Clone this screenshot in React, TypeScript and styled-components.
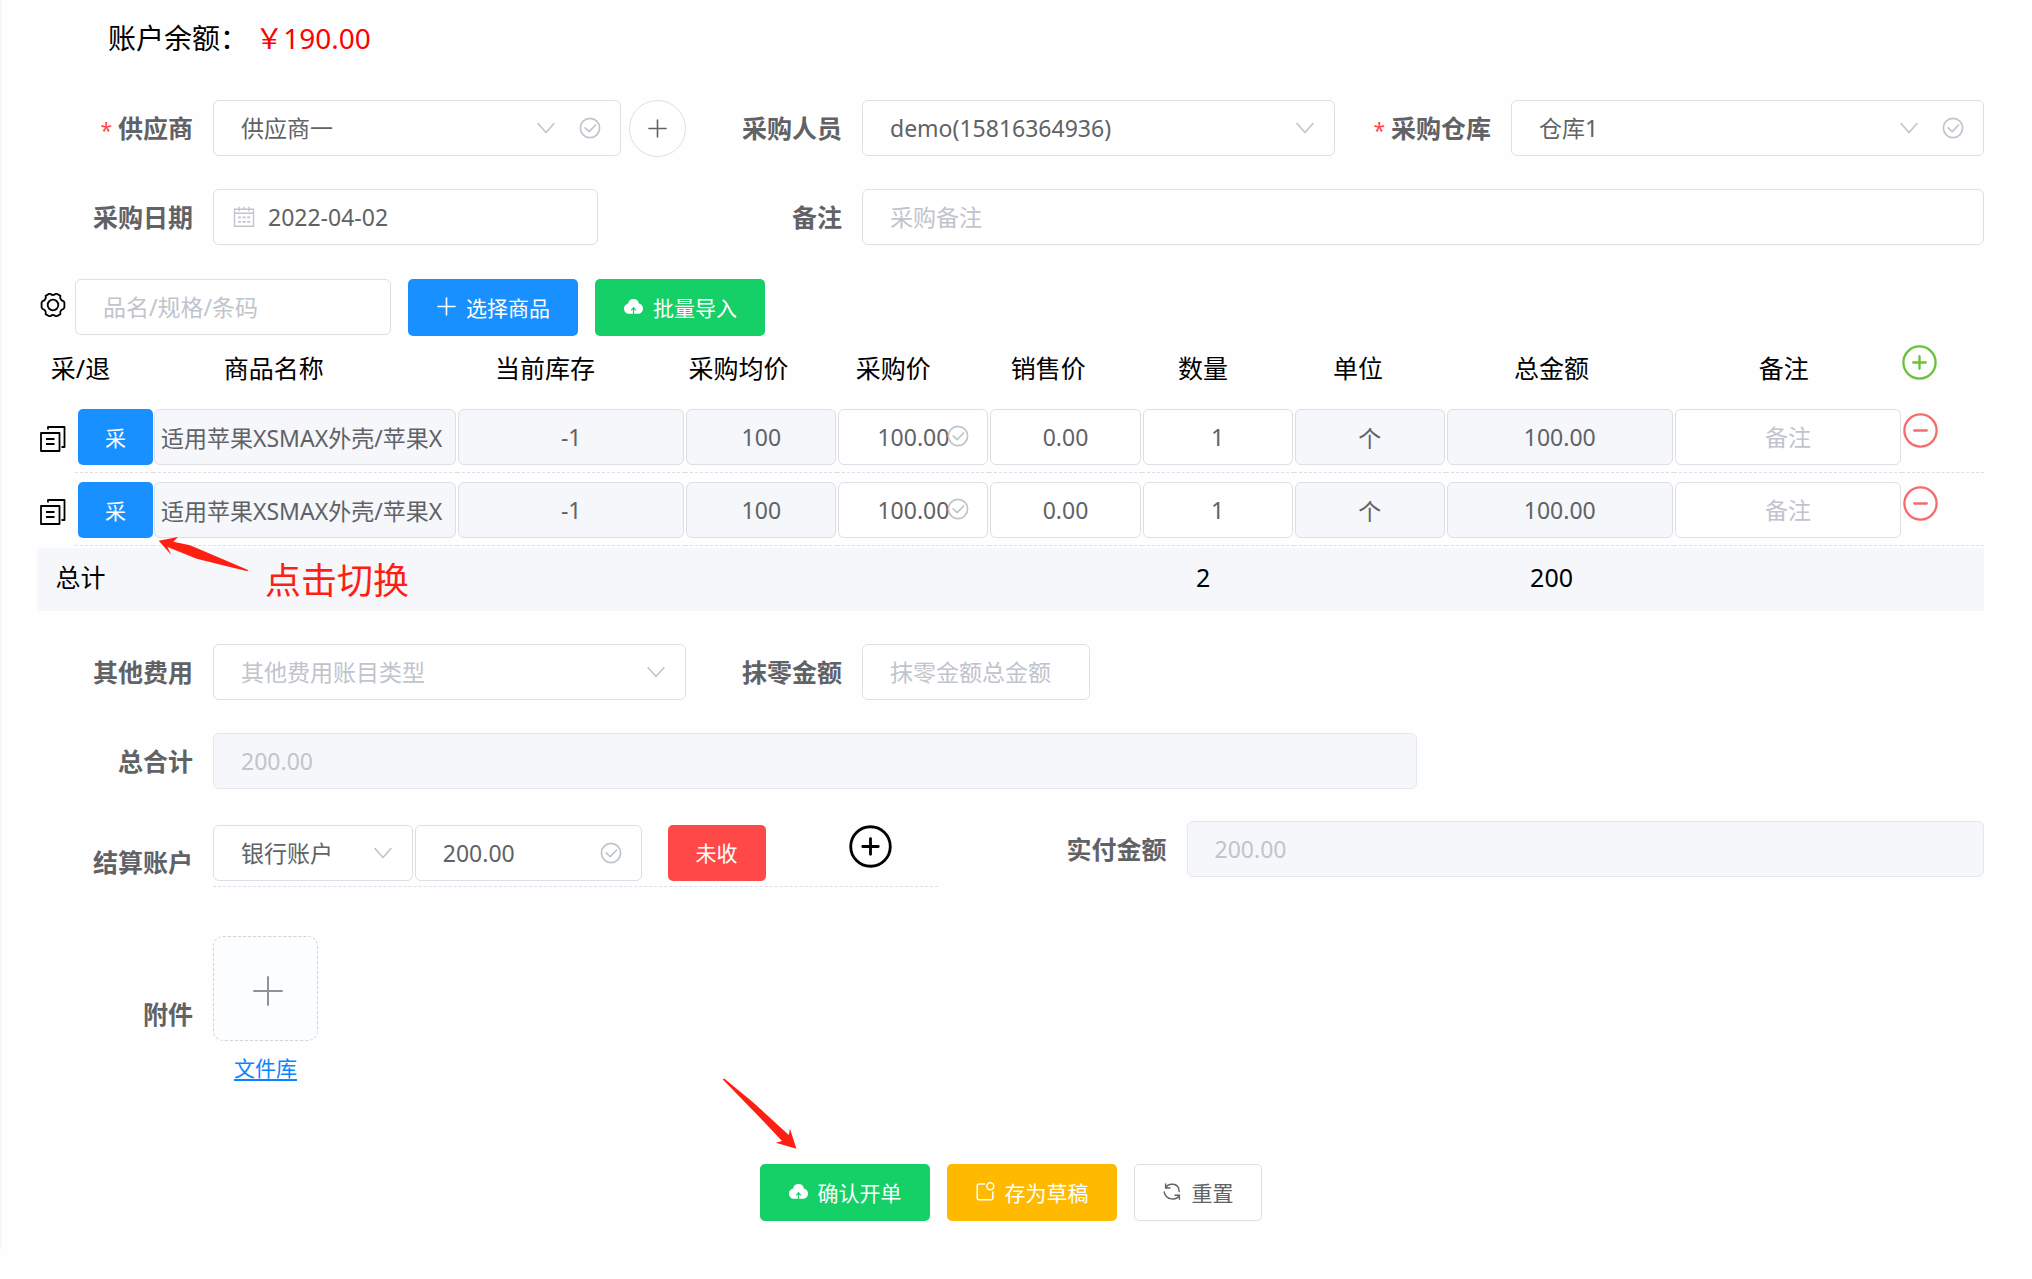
import React from "react";
import styled, { createGlobalStyle, css } from "styled-components";

const GlobalStyle = createGlobalStyle`
  *, *::before, *::after { box-sizing: border-box; }
  body { margin: 0; background: #fefefe; }
  body, button, input, select {
    font-family: "Noto Sans", "Noto Sans CJK SC", sans-serif;
  }
  button { cursor: pointer; }
`;

const color = {
  primary: "#1890ff",
  success: "#15cf67",
  warning: "#ffba00",
  danger: "#ff4949",
  border: "#dcdfe6",
  muted: "#c0c4cc",
  text: "#606266",
  fill: "#f5f7fa",
  mark: "#ff1f12",
};

/* ---------- page ---------- */

const Page = styled.main`
  padding: 18px 48px 28px 35px;
  border-left: 2px solid #f7f7f8;
  color: #000;
`;

const Balance = styled.p`
  margin: 0 0 42px;
  padding-left: 71px;
  font-size: 28px;
  line-height: 40px;
`;

const Amount = styled.span`
  color: #f00;
`;

/* ---------- form ---------- */

const FormGrid = styled.div`
  display: grid;
  grid-template-columns: repeat(6, minmax(0, 1fr));
  row-gap: 33px;
`;

const Field = styled.div<{ $span?: number }>`
  grid-column: span ${(p) => p.$span ?? 2};
  display: grid;
  grid-template-columns: 176px minmax(0, 1fr);
  align-items: center;
`;

const Label = styled.label<{ $required?: boolean }>`
  padding-right: 20px;
  text-align: right;
  font-size: 25px;
  font-weight: 700;
  line-height: 56px;
  color: ${color.text};
  white-space: nowrap;
  ${(p) =>
    p.$required &&
    css`
      &::before {
        content: "*";
        margin-right: 6px;
        font-size: 21px;
        line-height: 1;
        font-weight: 400;
        color: #ff4949;
      }
    `}
`;

const GroupLabel = styled(Label).attrs({ as: "span" })`
  padding-top: 4px;
`;

const box = css`
  display: block;
  width: 100%;
  height: 56px;
  margin: 0;
  border: 1px solid ${color.border};
  border-radius: 6px;
  background: #fff;
  color: ${color.text};
  font-size: 23px;
  outline: none;
  text-overflow: clip;
  &::placeholder {
    color: ${color.muted};
    opacity: 1;
  }
  &:focus {
    border-color: ${color.primary};
  }
`;

const Input = styled.input<{ $filled?: boolean; $icon?: boolean }>`
  ${box}
  padding: 0 27px;
  ${(p) => p.$icon && "padding-left: 54px;"}
  ${(p) => p.$filled && `background: ${color.fill}; color: ${color.muted}; border-color: #e4e7ed;`}
`;

const Select = styled.select<{ $empty?: boolean }>`
  ${box}
  appearance: none;
  padding: 0 27px;
  ${(p) => p.$empty && `color: ${color.muted};`}
`;

const Control = styled.div<{ $grow?: number; $short?: string }>`
  position: relative;
  flex: ${(p) => p.$grow ?? 1} 1 0;
  min-width: 0;
  width: ${(p) => p.$short ?? "auto"};
`;

const Suffix = styled.span`
  position: absolute;
  inset: 0 20px 0 auto;
  display: flex;
  align-items: center;
  gap: 23px;
  color: ${color.muted};
  pointer-events: none;
`;

const Prefix = styled(Suffix)`
  inset: 0 auto 0 20px;
`;

const Inline = styled.div<{ $gap: number }>`
  display: flex;
  align-items: center;
  gap: ${(p) => p.$gap}px;
  height: 56px;
`;

/* ---------- buttons ---------- */

const Button = styled.button<{ $tone?: string }>`
  display: inline-flex;
  align-items: center;
  justify-content: center;
  gap: 9px;
  flex: none;
  height: 57px;
  padding: 0 ${(p) => (p.$tone ? 28 : 27)}px 2px;
  border: 1px solid ${(p) => p.$tone ?? color.border};
  border-width: ${(p) => (p.$tone ? 0 : 1)}px;
  border-radius: 5px;
  background: ${(p) => p.$tone ?? "#fff"};
  color: ${(p) => (p.$tone ? "#fff" : color.text)};
  font-size: 21px;
  white-space: nowrap;
`;

const StateButton = styled(Button)`
  height: 56px;
`;

const RowButton = styled(StateButton)`
  width: 75px;
  padding: 0;
`;

const RoundButton = styled.button`
  display: flex;
  align-items: center;
  justify-content: center;
  flex: none;
  width: 57px;
  height: 57px;
  padding: 0;
  border: 1px solid ${color.border};
  border-radius: 50%;
  background: #fff;
  color: ${color.text};
`;

const IconButton = styled.button<{ $color?: string }>`
  display: flex;
  padding: 0;
  border: 0;
  background: none;
  color: ${(p) => p.$color ?? "#000"};
`;

/* ---------- toolbar ---------- */

const Toolbar = styled.div`
  display: flex;
  align-items: flex-start;
  gap: 17px;
  margin-top: 34px;
`;

const Search = styled.div`
  display: flex;
  align-items: center;
  gap: 9px;
  width: 354px;
  padding-left: 3px;
  ${IconButton} { padding-bottom: 4px; }
`;

/* ---------- table ---------- */

const TableArea = styled.section`
  position: relative;
`;

const Table = styled.table`
  display: block;
  thead, tbody, tfoot { display: block; }
`;

const SummaryRow = styled.tr<{ $total?: boolean }>`
  display: grid;
  grid-template-columns: 82px 4fr 3fr repeat(5, 2fr) 3fr 3fr 84px;
  height: 64px;
  line-height: 64px;
  font-size: 25px;
  text-align: center;
  th, td {
    padding: 0;
    font-weight: 400;
    white-space: nowrap;
  }
  th:first-child { padding-left: 5px; }
  ${(p) =>
    p.$total &&
    css`
      height: 63px;
      margin-top: 2px;
      line-height: 59px;
      background: ${color.fill};
    `}
`;

const AddCell = styled.td`
  && { padding: 9px 0 0 2px; }
`;

const ItemRow = styled.tr`
  display: grid;
  grid-template-columns: 38px 78px 4fr 3fr repeat(5, 2fr) 3fr 3fr 82px;
`;

const Cell = styled.td`
  position: relative;
  min-width: 0;
  padding: 9px 1px 7px;
  border-bottom: 1px dashed ${color.border};
`;

const CopyCell = styled.td`
  padding: 26px 0 0 3px;
`;

const ToggleCell = styled(Cell)`
  padding-left: 3px;
  padding-right: 0;
`;

const RemoveCell = styled(Cell)`
  padding-top: 13px;
`;

const CellInput = styled.input<{ $filled?: boolean; $tight?: boolean }>`
  ${box}
  padding: 0 ${(p) => (p.$tight ? 6 : 20)}px;
  text-align: ${(p) => (p.$tight ? "left" : "center")};
  ${(p) => p.$filled && `background: ${color.fill};`}
`;

const CellSuffix = styled(Suffix)`
  inset: 0 20px 0 auto;
`;

/* ---------- hand-drawn notes ---------- */

const NoteText = styled.strong`
  position: absolute;
  top: 225px;
  left: 228px;
  font-size: 36px;
  font-weight: 400;
  line-height: 40px;
  color: ${color.mark};
`;

const RowArrow = styled.svg`
  position: absolute;
  top: 200px;
  left: 121px;
  fill: ${color.mark};
`;

const ConfirmWrap = styled.div`
  position: relative;
`;

const ConfirmArrow = styled.svg`
  position: absolute;
  top: -86px;
  left: -38px;
  fill: ${color.mark};
`;

/* ---------- settlement ---------- */

const FeeSection = styled.section`
  margin-top: 33px;
`;

const Settlement = styled.div`
  display: grid;
  grid-template-columns: repeat(2, minmax(0, 1fr));
  align-items: start;
  margin-top: 32px;
`;

const AccountField = styled.div`
  display: grid;
  grid-template-columns: 176px minmax(0, 1fr);
  align-items: start;
  padding: 4px 73px 0 0;
  ${Label} { padding-top: 9px; }
`;

const AccountRow = styled.div`
  display: flex;
  align-items: flex-start;
  gap: 2px;
  padding-bottom: 5px;
  border-bottom: 1px dashed ${color.border};
`;

const AccountState = styled.div`
  display: flex;
  align-items: flex-start;
  gap: 83px;
  padding: 0 46px 0 24px;
`;

const Attachment = styled.div`
  display: grid;
  grid-template-columns: 176px 105px;
  align-items: center;
  margin-top: 46px;
`;

const Upload = styled.button`
  display: flex;
  align-items: center;
  justify-content: center;
  width: 105px;
  height: 105px;
  padding: 4px 0 0 4px;
  border: 1px dashed #d0d3d8;
  border-radius: 10px;
  background: #fbfdff;
  color: #8c939d;
`;

const LibraryLink = styled.a`
  display: block;
  margin-top: 7px;
  text-align: center;
  font-size: 21px;
  line-height: 40px;
  color: #0a84ff;
  text-underline-offset: 3px;
`;

const Actions = styled.footer`
  display: flex;
  justify-content: center;
  gap: 17px;
  margin-top: 76px;
`;

/* ---------- icons ---------- */

const Chevron = () => (
  <svg width="20" height="20" viewBox="0 0 20 20" fill="none" stroke="currentColor" strokeWidth="1.6" strokeLinecap="round" strokeLinejoin="round" aria-hidden="true">
    <path d="M2 5.5 10 14.5 18 5.5" />
  </svg>
);

const Check = () => (
  <svg width="22" height="22" viewBox="0 0 22 22" fill="none" stroke="currentColor" strokeWidth="1.7" strokeLinecap="round" strokeLinejoin="round" aria-hidden="true">
    <circle cx="11" cy="11" r="9.6" />
    <path d="M6.2 10.8 10.2 14.6 16.6 8" />
  </svg>
);

const Plus = ({ size = 21, weight = 1.6 }: { size?: number; weight?: number }) => (
  <svg width={size} height={size} viewBox={`0 0 ${size} ${size}`} stroke="currentColor" strokeWidth={weight} strokeLinecap="round" aria-hidden="true">
    <path d={`M${size / 2} 2V${size - 2}M2 ${size / 2}H${size - 2}`} />
  </svg>
);

const CircleSign = ({ size = 35, weight = 2.3, minus = false }: { size?: number; weight?: number; minus?: boolean }) => (
  <svg width={size} height={size} viewBox="0 0 35 35" fill="none" stroke="currentColor" strokeWidth={weight} strokeLinecap="round" aria-hidden="true">
    <circle cx="17.5" cy="17.5" r="16.1" />
    <path d={minus ? "M11.2 17.5H23.8" : "M11.2 17.5H23.8M17.5 11.2V23.8"} />
  </svg>
);

const Calendar = () => (
  <svg width="22" height="22" viewBox="0 0 22 22" fill="none" stroke="currentColor" strokeWidth="1.4" aria-hidden="true">
    <path d="M1.5 3.2H20.5V20.3H1.5ZM1.5 7.3H20.5M6 .8V5.3M11 .8V3.2M16 .8V5.3" />
    <path d="M5 11.3H8M9.6 11.3H12.6M14.2 11.3H17.2M5 15.8H8M9.6 15.8H12.6M14.2 15.8H17.2" strokeWidth="1.8" />
  </svg>
);

const Gear = () => (
  <svg width="26" height="26" viewBox="0 0 26 26" fill="none" stroke="currentColor" strokeWidth="1.8" strokeLinejoin="round" aria-hidden="true">
    <path d="M9.200 1.800H10.400C11.400 3.400 14.600 3.400 15.600 1.800H16.800L20.400 3.900C19.600 6 21.200 8.900 23.600 9.200L24.400 10.600V15.400L23.600 16.800C21.200 17.100 19.600 20 20.400 22.100L16.800 24.200H15.600C14.600 22.600 11.400 22.600 10.400 24.200H9.200L5.600 22.100C6.400 20 4.800 17.100 2.400 16.800L1.600 15.400V10.600L2.400 9.200C4.800 8.900 6.400 6 5.600 3.900Z" />
    <circle cx="13" cy="13" r="5.3" />
  </svg>
);

const Copy = () => (
  <svg width="26" height="26" viewBox="0 0 26 26" fill="none" stroke="currentColor" strokeWidth="1.8" strokeLinejoin="round" aria-hidden="true">
    <path d="M1 7H19.500V25H1ZM8 3.500V1H24.500V21H21.500" />
    <path d="M6 13H14.500M6 18H14.500" />
  </svg>
);

const CloudUp = () => (
  <svg width="21" height="21" viewBox="0 0 21 21" aria-hidden="true">
    <path fill="currentColor" d="M10.500 3C7.500 3 5.400 4.900 5.100 7.500C2.700 8 1 9.900 1 12.500C1 15.600 3.200 17.800 6 17.800H9.900V13.400L8.100 14.800L7.600 14.200L10.500 10.800L13.400 14.200L12.900 14.800L11.100 13.400V17.800H15C17.800 17.800 20 15.600 20 12.500C20 9.900 18.300 8 15.900 7.500C15.600 4.900 13.500 3 10.500 3Z" />
  </svg>
);

const Draft = () => (
  <svg width="21" height="21" viewBox="0 0 21 21" fill="none" stroke="currentColor" strokeWidth="1.5" strokeLinecap="round" aria-hidden="true">
    <path d="M9.500 3H4.200Q2.200 3 2.200 5V16.800Q2.200 18.800 4.200 18.800H15.800Q17.800 18.800 17.800 16.800V11" />
    <circle cx="15.300" cy="5.200" r="3.500" />
  </svg>
);

const Refresh = () => (
  <svg width="21" height="21" viewBox="0 0 21 21" fill="none" stroke="currentColor" strokeWidth="1.400" strokeLinecap="round" aria-hidden="true">
    <path d="M3.600 3V7H8M17.400 18.200V14.200H13M3.600 7C6.500 1.500 17 1.500 17.200 10.500M17.400 14.200C14.500 19.700 4 19.700 2.200 11" />
  </svg>
);

/* ---------- data ---------- */

const headings = ["商品名称", "当前库存", "采购均价", "采购价", "销售价", "数量", "单位", "总金额", "备注"];

const items = [1, 2].map((id) => ({
  id,
  name: "适用苹果XSMAX外壳/苹果X",
  stock: "-1",
  average: "100",
  price: "100.00",
  sale: "0.00",
  count: "1",
  unit: "个",
  total: "100.00",
}));

export default function App() {
  return (
    <>
      <GlobalStyle />
      <Page>
        <Balance>
          账户余额： <Amount>￥190.00</Amount>
        </Balance>

        <FormGrid>
          <Field>
            <Label htmlFor="supplier" $required>供应商</Label>
            <Inline $gap={8}>
              <Control>
                <Select id="supplier"><option>供应商一</option></Select>
                <Suffix><Chevron /><Check /></Suffix>
              </Control>
              <RoundButton type="button" aria-label="新增供应商"><Plus /></RoundButton>
            </Inline>
          </Field>
          <Field>
            <Label htmlFor="buyer">采购人员</Label>
            <Control>
              <Select id="buyer"><option>demo(15816364936)</option></Select>
              <Suffix><Chevron /></Suffix>
            </Control>
          </Field>
          <Field>
            <Label htmlFor="warehouse" $required>采购仓库</Label>
            <Control>
              <Select id="warehouse"><option>仓库1</option></Select>
              <Suffix><Chevron /><Check /></Suffix>
            </Control>
          </Field>
          <Field>
            <Label htmlFor="date">采购日期</Label>
            <Control $short="385px">
              <Input id="date" defaultValue="2022-04-02" $icon />
              <Prefix><Calendar /></Prefix>
            </Control>
          </Field>
          <Field $span={4}>
            <Label htmlFor="remark">备注</Label>
            <Input id="remark" placeholder="采购备注" />
          </Field>
        </FormGrid>

        <Toolbar>
          <Search>
            <IconButton type="button" aria-label="列设置"><Gear /></IconButton>
            <Input aria-label="搜索商品" placeholder="品名/规格/条码" />
          </Search>
          <Button type="button" $tone={color.primary}><Plus />选择商品</Button>
          <Button type="button" $tone={color.success}><CloudUp />批量导入</Button>
        </Toolbar>

        <TableArea>
          <Table>
            <thead>
              <SummaryRow>
                <th scope="col">采/退</th>
                {headings.map((h) => <th scope="col" key={h}>{h}</th>)}
                <AddCell>
                  <IconButton type="button" aria-label="添加一行" $color="#67c23a"><CircleSign /></IconButton>
                </AddCell>
              </SummaryRow>
            </thead>
            <tbody>
              {items.map((it) => (
                <ItemRow key={it.id}>
                  <CopyCell><IconButton type="button" aria-label="复制"><Copy /></IconButton></CopyCell>
                  <ToggleCell><RowButton type="button" $tone={color.primary}>采</RowButton></ToggleCell>
                  <Cell><CellInput aria-label="商品名称" readOnly value={it.name} $filled $tight /></Cell>
                  <Cell><CellInput aria-label="当前库存" readOnly value={it.stock} $filled /></Cell>
                  <Cell><CellInput aria-label="采购均价" readOnly value={it.average} $filled /></Cell>
                  <Cell>
                    <CellInput aria-label="采购价" defaultValue={it.price} />
                    <CellSuffix><Check /></CellSuffix>
                  </Cell>
                  <Cell><CellInput aria-label="销售价" defaultValue={it.sale} /></Cell>
                  <Cell><CellInput aria-label="数量" defaultValue={it.count} /></Cell>
                  <Cell><CellInput aria-label="单位" readOnly value={it.unit} $filled /></Cell>
                  <Cell><CellInput aria-label="总金额" readOnly value={it.total} $filled /></Cell>
                  <Cell><CellInput aria-label="备注" placeholder="备注" /></Cell>
                  <RemoveCell>
                    <IconButton type="button" aria-label="删除" $color="#f56c6c"><CircleSign minus /></IconButton>
                  </RemoveCell>
                </ItemRow>
              ))}
            </tbody>
            <tfoot>
              <SummaryRow $total>
                <th scope="row">总计</th>
                <td /><td /><td /><td /><td />
                <td>2</td>
                <td />
                <td>200</td>
                <td /><td />
              </SummaryRow>
            </tfoot>
          </Table>
          <RowArrow width="92" height="36" viewBox="0 0 92 36" aria-hidden="true">
            <path d="M.7 4.700 20 1 15.300 5.700 32 9.300 62 22 90 34 89.500 35.300 72 31 38.700 22.700 9.500 11 13.300 19Z" />
          </RowArrow>
          <NoteText>点击切换</NoteText>
        </TableArea>

        <FeeSection>
          <FormGrid>
            <Field>
              <Label htmlFor="fee">其他费用</Label>
              <Control>
                <Select id="fee" $empty><option>其他费用账目类型</option></Select>
                <Suffix><Chevron /></Suffix>
              </Control>
            </Field>
            <Field $span={4}>
              <Label htmlFor="discount">抹零金额</Label>
              <Control $short="228px"><Input id="discount" placeholder="抹零金额总金额" /></Control>
            </Field>
            <Field $span={6}>
              <Label htmlFor="sum">总合计</Label>
              <Control $short="68%"><Input id="sum" readOnly value="200.00" $filled /></Control>
            </Field>
          </FormGrid>

          <Settlement>
            <AccountField>
              <Label htmlFor="account">结算账户</Label>
              <AccountRow>
                <Control $grow={200}>
                  <Select id="account"><option>银行账户</option></Select>
                  <Suffix><Chevron /></Suffix>
                </Control>
                <Control $grow={227}>
                  <Input aria-label="结算金额" defaultValue="200.00" />
                  <Suffix><Check /></Suffix>
                </Control>
                <AccountState>
                  <StateButton type="button" $tone={color.danger}>未收</StateButton>
                  <IconButton type="button" aria-label="添加结算账户"><CircleSign size={43} /></IconButton>
                </AccountState>
              </AccountRow>
            </AccountField>
            <Field $span={1}>
              <Label htmlFor="paid">实付金额</Label>
              <Input id="paid" readOnly value="200.00" $filled />
            </Field>
          </Settlement>

          <Attachment>
            <GroupLabel>附件</GroupLabel>
            <div>
              <Upload type="button" aria-label="上传附件"><Plus size={32} weight={2} /></Upload>
              <LibraryLink href="#library">文件库</LibraryLink>
            </div>
          </Attachment>
        </FeeSection>

        <Actions>
          <ConfirmWrap>
            <Button type="button" $tone={color.success}><CloudUp />确认开单</Button>
            <ConfirmArrow width="76" height="72" viewBox="0 0 76 72" aria-hidden="true">
              <path d="M.8 1.500 2.200.6 31.600 24.700 66.800 57 68 50.700 74.400 70.700 53.800 64.700 60 63 35.400 37Z" />
            </ConfirmArrow>
          </ConfirmWrap>
          <Button type="button" $tone={color.warning}><Draft />存为草稿</Button>
          <Button type="button"><Refresh />重置</Button>
        </Actions>
      </Page>
    </>
  );
}
